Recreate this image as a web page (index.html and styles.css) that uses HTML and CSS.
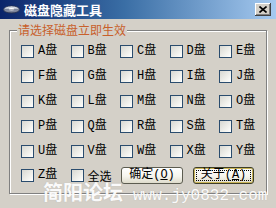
FILE: index.html
```html
<!DOCTYPE html>
<html>
<head>
<meta charset="utf-8">
<link rel="stylesheet" href="styles.css">
</head>
<body>
<div class="window">
  <div class="titlebar">
    <svg class="ticon" width="17" height="9" viewBox="0 0 17 9">
      <defs>
        <linearGradient id="dg" x1="0" y1="0" x2="0" y2="1">
          <stop offset="0" stop-color="#f4f6fa"/>
          <stop offset="0.5" stop-color="#aab2c4"/>
          <stop offset="1" stop-color="#5a6278"/>
        </linearGradient>
      </defs>
      <ellipse cx="8.5" cy="4.5" rx="8" ry="3.6" fill="url(#dg)" stroke="#2a3350" stroke-width="0.8"/>
      <ellipse cx="8.5" cy="4.2" rx="2.8" ry="1.3" fill="#ffffff"/>
      <line x1="1" y1="4.8" x2="16" y2="4.8" stroke="#3a4460" stroke-width="0.6"/>
    </svg>
    <span class="title">磁盘隐藏工具</span>
    <span class="close">
      <svg width="8" height="7" viewBox="0 0 8 7"><path d="M0.5 0.5 L7.5 6.5 M7.5 0.5 L0.5 6.5" stroke="#000" stroke-width="1.6" fill="none"/></svg>
    </span>
  </div>
  <div class="client">
    <fieldset class="group">
      <legend>请选择磁盘立即生效</legend>
      <div class="grid">
        <div class="item"><span class="cb"></span><span>A盘</span></div>
        <div class="item"><span class="cb"></span><span>B盘</span></div>
        <div class="item"><span class="cb"></span><span>C盘</span></div>
        <div class="item"><span class="cb"></span><span>D盘</span></div>
        <div class="item"><span class="cb"></span><span>E盘</span></div>
        <div class="item"><span class="cb"></span><span>F盘</span></div>
        <div class="item"><span class="cb"></span><span>G盘</span></div>
        <div class="item"><span class="cb"></span><span>H盘</span></div>
        <div class="item"><span class="cb"></span><span>I盘</span></div>
        <div class="item"><span class="cb"></span><span>J盘</span></div>
        <div class="item"><span class="cb"></span><span>K盘</span></div>
        <div class="item"><span class="cb"></span><span>L盘</span></div>
        <div class="item"><span class="cb"></span><span>M盘</span></div>
        <div class="item"><span class="cb"></span><span>N盘</span></div>
        <div class="item"><span class="cb"></span><span>O盘</span></div>
        <div class="item"><span class="cb"></span><span>P盘</span></div>
        <div class="item"><span class="cb"></span><span>Q盘</span></div>
        <div class="item"><span class="cb"></span><span>R盘</span></div>
        <div class="item"><span class="cb"></span><span>S盘</span></div>
        <div class="item"><span class="cb"></span><span>T盘</span></div>
        <div class="item"><span class="cb"></span><span>U盘</span></div>
        <div class="item"><span class="cb"></span><span>V盘</span></div>
        <div class="item"><span class="cb"></span><span>W盘</span></div>
        <div class="item"><span class="cb"></span><span>X盘</span></div>
        <div class="item"><span class="cb"></span><span>Y盘</span></div>
      </div>
      <div class="lastrow">
        <div class="item cell"><span class="cb"></span><span>Z盘</span></div>
        <div class="item cell"><span class="cb"></span><span class="cjk">全选</span></div>
        <button class="btn ok">确定(<u>O</u>)</button>
        <button class="btn about">关于(<u>A</u>)</button>
      </div>
    </fieldset>
  </div>
  <div class="watermark">
    <span class="wm-cn">简阳论坛</span>
    <span class="wm-url">www.jy0832.com</span>
  </div>
</div>
</body>
</html>
```
FILE: styles.css
```css
html, body {
  margin: 0;
  padding: 0;
  background: #d4d0c8;
}

.window {
  position: relative;
  width: 276px;
  height: 208px;
  overflow: hidden;
  background: #d4d0c8;
  font-family: "Liberation Mono", "Noto Sans CJK SC", monospace;
  font-size: 12px;
  color: #000;
}

.titlebar {
  height: 19px;
  display: flex;
  align-items: center;
  padding: 0 5px 0 3px;
  background: linear-gradient(to right, #0a246a 0%, #3a6ea5 45%, #a6caf0 100%);
}

.ticon {
  flex: none;
  margin-right: 4px;
}

.title {
  flex: 1;
  color: #fff;
  font: bold 13px/19px "Noto Sans CJK SC", sans-serif;
}

.close {
  flex: none;
  width: 16px;
  height: 13px;
  box-sizing: border-box;
  display: flex;
  align-items: center;
  justify-content: center;
  background: #d4d0c8;
  box-shadow: inset -1px -1px 0 #404040, inset 1px 1px 0 #ffffff, inset -2px -2px 0 #808080;
}

.client {
  padding: 4px 9px 0 9px;
}

.group {
  margin: 0;
  padding: 8px 0 9px 11px;
  border: 1px solid #808080;
  box-shadow: inset 1px 1px 0 #ffffff, 1px 1px 0 #ffffff;
  min-width: 0;
}

.group legend {
  margin-left: -4px;
  padding: 0 1px;
  font: 12px/14px "Noto Sans CJK SC", sans-serif;
  color: #c8602c;
  background: #d4d0c8;
  position: relative;
}

.grid {
  display: grid;
  grid-template-columns: repeat(5, 49.5px);
  grid-auto-rows: 13px;
  row-gap: 12px;
}

.item {
  display: flex;
  align-items: center;
  gap: 4px;
  line-height: 13px;
  white-space: nowrap;
}

.cb {
  flex: none;
  width: 13px;
  height: 13px;
  box-sizing: border-box;
  border: 1px solid #2a4c6e;
  background: linear-gradient(135deg, #d8d8d2 0%, #f4f4f0 70%, #ffffff 100%);
}

.cjk {
  font-family: "Noto Sans CJK SC", sans-serif;
}

.lastrow {
  display: flex;
  align-items: center;
  height: 17px;
  margin-top: 9px;
}

.cell {
  width: 49.5px;
  flex: none;
}

.btn {
  flex: none;
  height: 17px;
  width: 62px;
  margin: 0;
  padding: 0;
  box-sizing: border-box;
  font: 12px/15px "Liberation Mono", "Noto Sans CJK SC", monospace;
  color: #000;
  border: 1px solid #5c5c50;
  border-radius: 3px;
  background: linear-gradient(#ffffff 0%, #f6f5ee 55%, #dedbcb 100%);
}

.btn.ok {
  margin-left: 1px;
}

.btn.about {
  width: 61px;
  margin-left: 10px;
  border-color: #3e3e28;
  box-shadow: inset 0 0 0 1px #c9b456;
  outline: 1px dotted #000;
  outline-offset: -4px;
}

.watermark {
  position: absolute;
  left: 43px;
  top: 180px;
  display: flex;
  align-items: baseline;
  gap: 10px;
  color: rgba(255, 255, 255, 0.95);
  text-shadow: 0 0 1px rgba(160, 160, 160, 0.5);
  white-space: nowrap;
}

.wm-cn {
  font: bold 20px/24px "Noto Sans CJK SC", sans-serif;
}

.wm-url {
  font: 16px/24px "Liberation Mono", monospace;
}
```
